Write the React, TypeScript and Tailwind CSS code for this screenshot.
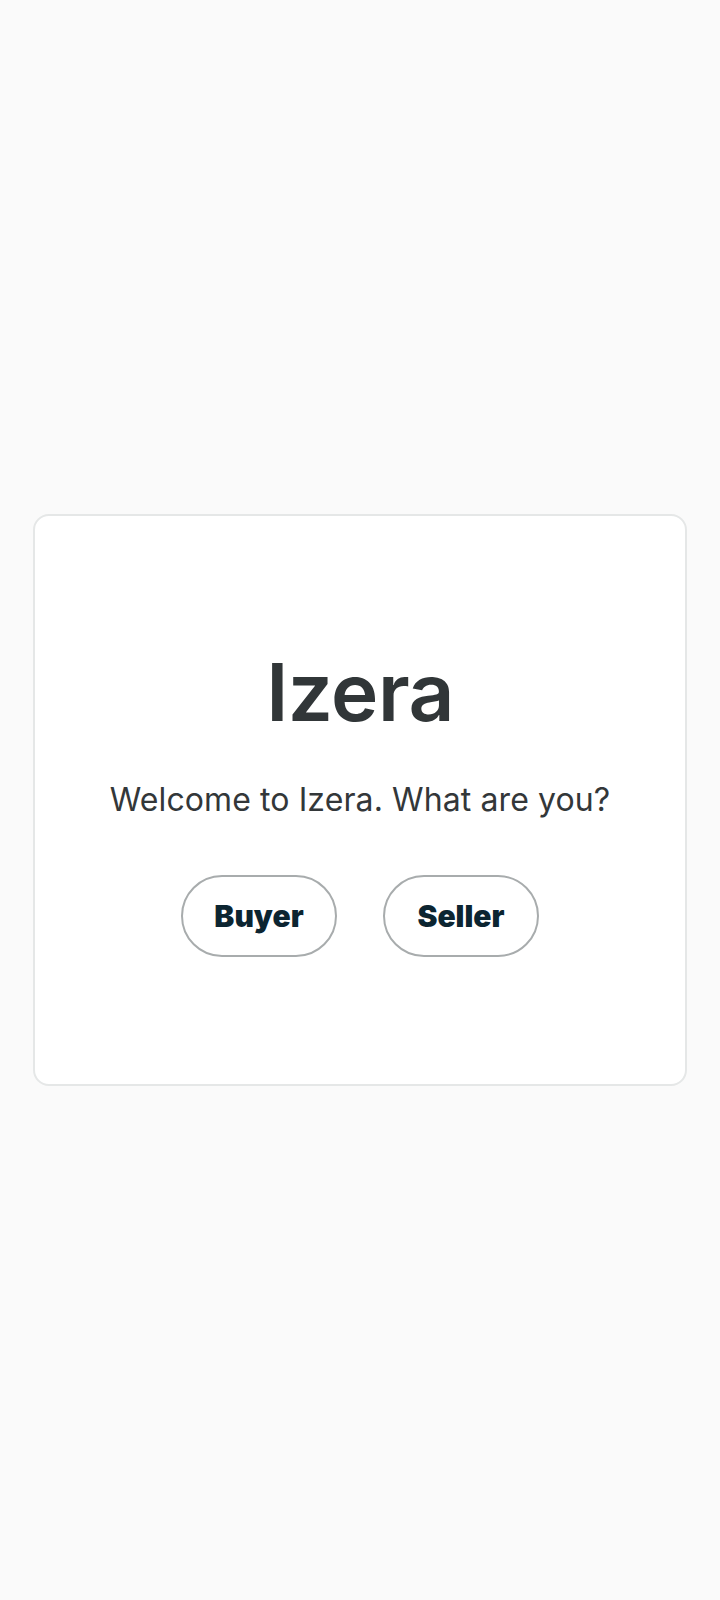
import React from "react";

export default function App() {
  return (
    <div
      className="min-h-screen w-full bg-[#fafafa] flex items-center justify-center px-[33px]"
      style={{ fontFamily: "Inter, 'Noto Sans', sans-serif" }}
    >
      <div className="w-full bg-white border-2 border-[#e5e7e7] rounded-[16px] pt-[136px] pb-[127px] flex flex-col items-center">
        <h1 className="text-[80px] leading-[80px] font-semibold text-[#313638] tracking-[-0.5px]">
          Izera
        </h1>
        <p className="mt-[49px] text-[32px] leading-[38px] font-normal text-[#333739] tracking-[0.1px]">
          Welcome to Izera. What are you?
        </p>
        <div className="mt-[56px] flex gap-[46px]">
          <button className="w-[156px] h-[82px] rounded-full border-2 border-[#a8acad] bg-white text-[30px] font-black text-[#0c2531] flex items-center justify-center">
            Buyer
          </button>
          <button className="w-[156px] h-[82px] rounded-full border-2 border-[#a8acad] bg-white text-[30px] font-black text-[#0c2531] flex items-center justify-center">
            Seller
          </button>
        </div>
      </div>
    </div>
  );
}
